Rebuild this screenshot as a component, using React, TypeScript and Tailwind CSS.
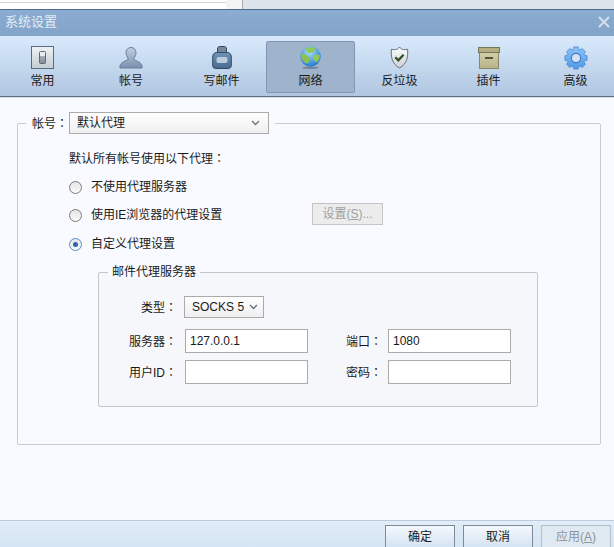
const font = "font-['Liberation_Sans','Noto_Sans_CJK_SC',sans-serif]"

function Colon() {
  return <span className="font-['Noto_Sans_CJK_TC',sans-serif]">：</span>
}

function ArrowDown() {
  return (
    <svg width="9" height="6" viewBox="0 0 9 6" fill="none" stroke="#6b7078" strokeWidth="1.3">
      <path d="M1 1l3.5 3.5L8 1" />
    </svg>
  )
}

function GeneralIcon() {
  return (
    <svg width="23" height="23" viewBox="0 0 23 23">
      <defs>
        <linearGradient id="gen" x1="0" y1="0" x2="0" y2="1">
          <stop offset="0" stopColor="#eef2f4" />
          <stop offset="1" stopColor="#c3cdd0" />
        </linearGradient>
        <linearGradient id="knob" x1="0" y1="0" x2="0" y2="1">
          <stop offset="0" stopColor="#e8ecef" />
          <stop offset="0.35" stopColor="#e8ecef" />
          <stop offset="0.4" stopColor="#a3adb8" />
          <stop offset="1" stopColor="#7f8b99" />
        </linearGradient>
      </defs>
      <rect x="0.5" y="0.5" width="22" height="22" fill="url(#gen)" stroke="#5a6c80" />
      <rect x="8.5" y="5.5" width="6" height="12" rx="1" fill="url(#knob)" stroke="#5f6b78" />
    </svg>
  )
}

function AccountIcon() {
  return (
    <svg width="24" height="24" viewBox="0 0 24 24">
      <defs>
        <linearGradient id="acc" x1="0" y1="0" x2="0" y2="1">
          <stop offset="0" stopColor="#c2cfdf" />
          <stop offset="1" stopColor="#7a90b0" />
        </linearGradient>
      </defs>
      <path d="M12 1.500c3 0 5 2.200 5 5.200 0 2.300-1 4.100-2 5.200v1.800c2 1.300 6.500 2 8 5.800v2.500H1v-2.500c1.500-3.800 6-4.500 8-5.800v-1.800c-1-1.100-2-2.900-2-5.200 0-3 2-5.200 5-5.200z" fill="url(#acc)" stroke="#6a7f9e" strokeWidth="1" />
    </svg>
  )
}

function MailIcon() {
  return (
    <svg width="20" height="23" viewBox="0 0 20 23">
      <defs>
        <linearGradient id="stamp" x1="0" y1="0" x2="0" y2="1">
          <stop offset="0" stopColor="#6f93b8" />
          <stop offset="1" stopColor="#486a8e" />
        </linearGradient>
      </defs>
      <path d="M5.500 7V3c0-1.500 1-2.500 2-2.500h5c1 0 2 1 2 2.500v4z" fill="#76889c" stroke="#33475e" />
      <path d="M.7 11c0-3 1.800-4.500 4-4.500h10.600c2.200 0 4 1.500 4 4.500v8.500c0 2-1.300 3-3 3H3.700c-1.700 0-3-1-3-3z" fill="url(#stamp)" stroke="#2f4a68" />
      <rect x="4.500" y="11" width="11" height="6" rx="2" fill="#b9cbdd" />
    </svg>
  )
}

function GlobeIcon() {
  return (
    <svg width="23" height="23" viewBox="0 0 23 23">
      <defs>
        <radialGradient id="sea" cx="0.45" cy="0.3" r="0.8">
          <stop offset="0" stopColor="#a9dcf3" />
          <stop offset="0.7" stopColor="#3f8fd8" />
          <stop offset="1" stopColor="#2463a8" />
        </radialGradient>
      </defs>
      <ellipse cx="11.500" cy="21.800" rx="8" ry="1" fill="#6f8098" />
      <circle cx="11.500" cy="10.500" r="10.300" fill="url(#sea)" />
      <path d="M7 2.200C10 .8 14 .8 16.500 2.200c.5 1.800-1.500 2.600-2.500 4.200-1.500.8-3 0-4 .8C8.500 6.800 8 5 7 4.200z" fill="#92c85a" />
      <path d="M1.800 8c2-.4 3.800 0 5.600 1.300 1.500 1 2.900 1.800 3.300 3.600.3 1.800-1.300 3.100-2.300 4.800C5 16.800 2 13 1.800 8z" fill="#8cc152" />
      <path d="M14.500 10c1.800-1.300 4.200-1.700 6.200-.9.200 2.700-.8 5.300-2.600 7.100-1.800-.4-3.500-1.800-4-3.600-.2-.9 0-1.800.4-2.600z" fill="#92c85a" />
    </svg>
  )
}

function ShieldIcon() {
  return (
    <svg width="19" height="23" viewBox="0 0 19 23">
      <defs>
        <linearGradient id="shield" x1="0" y1="0" x2="0" y2="1">
          <stop offset="0" stopColor="#fbfcfc" />
          <stop offset="1" stopColor="#cdd2d7" />
        </linearGradient>
      </defs>
      <path d="M9.500 1c1 1.500 2.200 2.400 3.800 2.500 1.500.3 2.900.2 4.300-.3.500 7.500-.2 14.300-8.100 18.800C1.600 17.500.9 10.700 1.400 3.200c1.400.5 2.800.6 4.300.3C7.300 3.400 8.500 2.500 9.500 1z" fill="url(#shield)" stroke="#66727e" strokeWidth="1" />
      <path d="M5.300 11.300l3 3 5.300-5.600" fill="none" stroke="#2f4f22" strokeWidth="2.200" />
    </svg>
  )
}

function BoxIcon() {
  return (
    <svg width="22" height="22" viewBox="0 0 22 22">
      <defs>
        <linearGradient id="box" x1="0" y1="0" x2="0" y2="1">
          <stop offset="0" stopColor="#d2cea6" />
          <stop offset="1" stopColor="#b7b28a" />
        </linearGradient>
      </defs>
      <rect x="1.500" y="5.500" width="19" height="16" fill="url(#box)" stroke="#8a8768" />
      <rect x="0.500" y="0.500" width="21" height="5" fill="#b3ad7f" stroke="#77745a" />
      <rect x="7" y="10" width="8" height="2" fill="#55543f" />
    </svg>
  )
}

// eight tooth cog, outline worked out once from the angles
const gearPath = Array.from({ length: 8 })
  .map((_, i) => {
    const a = (i * Math.PI) / 4 - Math.PI / 2
    const pt = (r: number, d: number) =>
      `${(12 + r * Math.cos(a + d)).toFixed(2)} ${(12 + r * Math.sin(a + d)).toFixed(2)}`
    return `${i === 0 ? 'M' : 'L'}${pt(8.6, -0.36)}L${pt(11.3, -0.2)}L${pt(11.3, 0.2)}L${pt(8.6, 0.36)}`
  })
  .join('') + 'Z'

function GearIcon() {
  return (
    <svg width="24" height="24" viewBox="0 0 24 24">
      <defs>
        <linearGradient id="gear" x1="0" y1="0" x2="0" y2="1">
          <stop offset="0" stopColor="#8cc4fa" />
          <stop offset="1" stopColor="#4d98ea" />
        </linearGradient>
      </defs>
      <path d={gearPath} fill="url(#gear)" stroke="#4c86cc" strokeWidth="0.8" />
      <circle cx="12" cy="12" r="4.600" fill="#d3e2f2" stroke="#3f78bd" strokeWidth="1.100" />
    </svg>
  )
}

const tabs = [
  { label: '常用', icon: <GeneralIcon />, width: 'w-[85px]' },
  { label: '帐号', icon: <AccountIcon />, width: 'w-[92px]' },
  { label: '写邮件', icon: <MailIcon />, width: 'w-[89px]' },
  { label: '网络', icon: <GlobeIcon />, width: 'w-[89px]', active: true },
  { label: '反垃圾', icon: <ShieldIcon />, width: 'w-[89px]' },
  { label: '插件', icon: <BoxIcon />, width: 'w-[89px]' },
  { label: '高级', icon: <GearIcon />, width: 'w-[85px]' },
]

function Radio({ checked, label }: { checked?: boolean; label: string }) {
  return (
    <div className="flex items-center h-[20px]">
      <span className={`w-[13px] h-[13px] rounded-full border flex items-center justify-center bg-gradient-to-b from-[#e4e4e4] to-[#fafafa] ${checked ? 'border-[#5b8fc4]' : 'border-[#7c7c7c]'}`}>
        {checked && <span className="w-[5px] h-[5px] rounded-full bg-[#2f66a8]" />}
      </span>
      <span className="ml-[9px]">{label}</span>
    </div>
  )
}

function Field({ label, value, labelWidth, gap }: { label: string; value?: string; labelWidth: string; gap: string }) {
  return (
    <div className="flex items-center">
      <span className={`${labelWidth} text-right whitespace-nowrap`}>{label}<Colon /></span>
      <div className={`${gap} w-[123px] h-[24px] bg-white border border-[#ababab] pl-[4px] leading-[22px]`}>{value}</div>
    </div>
  )
}

export default function App() {
  return (
    <div className={`${font} w-[614px] h-[547px] overflow-hidden flex flex-col text-[12px] text-[#1a1a1a] bg-[#f9faff]`}>
      {/* window behind the dialog */}
      <div className="h-[9px] flex bg-white">
        <div className="w-[226px] h-[3px] border-b border-[#d6d6d6]" />
        <div className="w-[16px] bg-[#f4f4f4]" />
        <div className="flex-1 bg-[#dce3ea] border-l border-[#a8adb3]" />
      </div>

      <div className="h-[27px] flex items-center justify-between border-t-[1px] border-[#4f6b8c] bg-gradient-to-b from-[#8badd1] to-[#83a3c9] pl-[5px] pr-[4px] pb-[2px] text-[13px] text-[#e3edf6]">
        <span>系统设置</span>
        <svg width="12" height="12" viewBox="0 0 12 12" stroke="#d3e0ec" strokeWidth="2"><path d="M1 1l10 10M11 1L1 11" /></svg>
      </div>

      <div className="h-[61px] flex items-center border-b border-[#5b7089] bg-gradient-to-b from-[#d9eafc] to-[#b0c6e0]">
        {tabs.map(t => (
          <div
            key={t.label}
            className={`${t.width} shrink-0 h-[52px] mt-[1px] flex flex-col items-center ${t.active ? 'bg-[#9fb3cc] border border-[#8297b2] rounded-[2px]' : ''}`}
          >
            <div className={`h-[24px] flex items-center justify-center ${t.active ? 'mt-[4px]' : 'mt-[5px]'}`}>{t.icon}</div>
            <span className="mt-[4px] leading-[14px]">{t.label}</span>
          </div>
        ))}
      </div>
      <div className="h-[1px] bg-[#d9dce2]" />

      <div className="flex-1 pl-[17px] pt-[13px]">
        <div className="relative h-[322px] border border-[#c9cbd0] rounded-[2px] mt-[12px] w-[584px]">
          <div className="absolute -top-[12px] left-[8px] flex items-center bg-[#f9faff] px-[6px]">
            <span>帐号<Colon /></span>
            <div className="w-[200px] h-[22px] ml-[1px] flex items-center justify-between pl-[7px] pr-[8px] border border-[#ababab] bg-gradient-to-b from-[#ffffff] to-[#efefef]">
              <span>默认代理</span>
              <ArrowDown />
            </div>
          </div>

          <div className="pl-[51px] pt-[26px]">
            <div className="leading-[16px]">默认所有帐号使用以下代理<Colon /></div>
            <div className="mt-[10px] flex flex-col gap-[8px]">
              <Radio label="不使用代理服务器" />
              <div className="relative">
                <Radio label="使用IE浏览器的代理设置" />
                <div className="absolute left-[243px] top-[-2px] w-[71px] h-[22px] flex items-center justify-center border border-[#c4c4c4] bg-[#ececec] text-[#a0a0a0]">
                  设置(<span className="underline">S</span>)...
                </div>
              </div>
              <div className="mt-[1px]">
                <Radio checked label="自定义代理设置" />
              </div>
            </div>

            <div className="relative mt-[18px] ml-[29px] w-[440px] h-[135px] border border-[#c4c6ca] rounded-[2px] bg-[#f6f7fa]">
              <div className="absolute -top-[8px] left-[9px] px-[4px] bg-[#f9faff] leading-[14px]">邮件代理服务器</div>
              <div className="pt-[23px] pl-[42px] flex items-center">
                <span>类型<Colon /></span>
                <div className="ml-[7px] w-[80px] h-[22px] flex items-center gap-[5px] pl-[7px] border border-[#ababab] bg-gradient-to-b from-[#ffffff] to-[#efefef]">
                  <span>SOCKS 5</span>
                  <ArrowDown />
                </div>
              </div>
              <div className="mt-[11px] pl-[19px] flex flex-col gap-[7px]">
                <div className="flex">
                  <Field label="服务器" value="127.0.0.1" labelWidth="w-[59px]" gap="ml-[8px]" />
                  <div className="ml-[38px]"><Field label="端口" value="1080" labelWidth="w-[36px]" gap="ml-[6px]" /></div>
                </div>
                <div className="flex">
                  <Field label="用户ID" labelWidth="w-[59px]" gap="ml-[8px]" />
                  <div className="ml-[38px]"><Field label="密码" labelWidth="w-[36px]" gap="ml-[6px]" /></div>
                </div>
              </div>
            </div>
          </div>
        </div>
      </div>

      <div className="h-[27px] flex items-start justify-end border-t border-[#bccbdc] bg-gradient-to-b from-[#e1edf8] to-[#d5e5f3] pt-[4px] pr-[3px] gap-[8px]">
        <div className="w-[70px] h-[22px] flex items-center justify-center border border-[#7c8a99] border-b-0 bg-gradient-to-b from-[#f4f8fc] to-[#d5e4f2]">确定</div>
        <div className="w-[70px] h-[22px] flex items-center justify-center border border-[#7c8a99] border-b-0 bg-gradient-to-b from-[#f4f8fc] to-[#d5e4f2]">取消</div>
        <div className="w-[70px] h-[22px] flex items-center justify-center border border-[#b4bfca] border-b-0 bg-[#dfe9f2] text-[#8d949b]">应用(<span className="underline">A</span>)</div>
      </div>
    </div>
  )
}
